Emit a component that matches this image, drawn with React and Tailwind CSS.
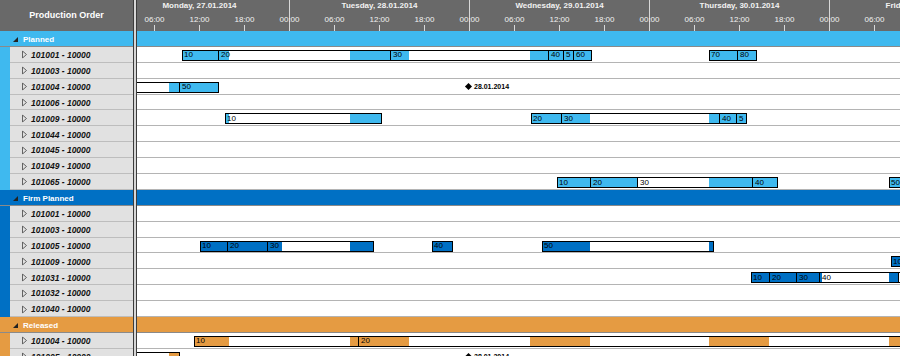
import React from 'react'

const ORIGIN = 137

const hours = Array.from({ length: 17 }, (_, k) => ({
  x: 154 + 45 * k,
  label: ['06:00', '12:00', '18:00', '00:00'][k % 4],
}))

const days = [
  { x: 199, label: 'Monday, 27.01.2014' },
  { x: 379, label: 'Tuesday, 28.01.2014' },
  { x: 559, label: 'Wednesday, 29.01.2014' },
  { x: 739, label: 'Thursday, 30.01.2014' },
  { x: 919, label: 'Friday, 31.01.2014' },
]

const groups = [
  {
    name: 'Planned',
    band: 'bg-[#3fb9ef]',
    rows: [
      {
        id: '101001 - 10000',
        bars: [
          { from: 182, to: 592, fills: [[182, 229], [350, 409], [530, 592]], marks: [[182, '10'], [218, '20'], [390, '30'], [548, '40'], [563, '5'], [573, '60']] },
          { from: 709, to: 757, fills: [[709, 757]], marks: [[709, '70'], [737, '80']] },
        ],
      },
      { id: '101003 - 10000' },
      {
        id: '101004 - 10000',
        bars: [{ from: 128, to: 219, fills: [[169, 219]], marks: [[179, '50']], ghost: 169 }],
        milestone: { x: 469, label: '28.01.2014' },
      },
      { id: '101006 - 10000' },
      {
        id: '101009 - 10000',
        bars: [
          { from: 225, to: 382, fills: [[225, 229], [350, 382]], marks: [[225, '10']] },
          { from: 531, to: 747, fills: [[531, 590], [709, 747]], marks: [[531, '20'], [561, '30'], [719, '40'], [736, '5']] },
        ],
      },
      { id: '101044 - 10000' },
      { id: '101045 - 10000' },
      { id: '101049 - 10000' },
      {
        id: '101065 - 10000',
        bars: [
          { from: 557, to: 778, fills: [[557, 638], [709, 778]], marks: [[557, '10'], [590, '20'], [637, '30'], [752, '40']] },
          { from: 889, to: 920, fills: [[889, 920]], marks: [[889, '50']] },
        ],
      },
    ],
  },
  {
    name: 'Firm Planned',
    band: 'bg-[#0070c4]',
    rows: [
      { id: '101001 - 10000' },
      { id: '101003 - 10000' },
      {
        id: '101005 - 10000',
        bars: [
          { from: 200, to: 374, fills: [[200, 282], [350, 374]], marks: [[200, '10'], [227, '20'], [267, '30']] },
          { from: 432, to: 453, fills: [[432, 453]], marks: [[432, '40']] },
          { from: 542, to: 714, fills: [[542, 590], [709, 714]], marks: [[542, '50']] },
        ],
      },
      { id: '101009 - 10000', bars: [{ from: 891, to: 920, fills: [[891, 920]], marks: [[891, '10']] }] },
      {
        id: '101031 - 10000',
        bars: [
          { from: 751, to: 920, fills: [[751, 822], [889, 898]], marks: [[751, '10'], [769, '20'], [796, '30'], [819, '40'], [898, '']] },
        ],
      },
      { id: '101032 - 10000' },
      { id: '101040 - 10000' },
    ],
  },
  {
    name: 'Released',
    band: 'bg-[#e59b42]',
    rows: [
      {
        id: '101004 - 10000',
        bars: [{ from: 194, to: 920, fills: [[194, 229], [350, 409], [530, 590], [709, 769], [889, 920]], marks: [[194, '10'], [358, '20']] }],
      },
      {
        id: '101005 - 10000',
        bars: [{ from: 128, to: 180, fills: [[169, 180]], marks: [], ghost: 169 }],
        milestone: { x: 469, label: '28.01.2014' },
      },
    ],
  },
]

const font = "font-['Liberation_Sans',Arial,sans-serif]"

function Bar({ bar, fill }) {
  const { from, to, fills = [], marks = [] } = bar
  return (
    <div
      className="absolute top-[3px] h-[11px] border border-black bg-white overflow-hidden"
      style={{ left: from - ORIGIN, width: to - from }}
    >
      {bar.ghost && (
        <div className="absolute -top-px -bottom-px left-[-1px] border-y border-[#b0b0b0] bg-white" style={{ width: bar.ghost - from }} />
      )}
      {fills.map(([a, b], i) => (
        <div key={i} className={`absolute inset-y-0 ${fill}`} style={{ left: a - from - 1, width: b - a }} />
      ))}
      {marks.map(([x, label], i) => (
        <div key={i} className="absolute inset-y-0 flex items-center" style={{ left: x - from - 1 }}>
          {x > from && <div className="w-px h-full bg-black" />}
          <span className="pl-[2px] text-[8px] leading-none text-black">{label}</span>
        </div>
      ))}
    </div>
  )
}

function Milestone({ m }) {
  return (
    <div className="absolute inset-y-0 flex items-center gap-[3px]" style={{ left: m.x - ORIGIN - 3 }}>
      <div className="w-[5px] h-[5px] bg-black rotate-45" />
      <span className="text-[7px] font-bold leading-none text-black">{m.label}</span>
    </div>
  )
}

function GroupLabel({ group }) {
  return (
    <div className={`h-[15.9px] shrink-0 flex items-center gap-[5px] pl-[13px] border-b border-[#8a8a8a] ${group.band}`}>
      <svg width="5" height="5" viewBox="0 0 5 5" className="translate-y-[1px]">
        <polygon points="5,0 5,5 0,5" fill="#222" />
      </svg>
      <span className="text-white font-bold text-[8px] leading-none translate-y-[1.5px]">{group.name}</span>
    </div>
  )
}

function ItemLabel({ row, group }) {
  return (
    <div className="h-[15.9px] shrink-0 flex">
      <div className={`w-[10px] shrink-0 ${group.band}`} />
      <div className="flex-1 flex items-center gap-[4px] pl-[12px] bg-[#e1e1e1] border-b border-[#bdbdbd]">
        <svg width="5" height="8" viewBox="0 0 5 8" className="translate-y-[0.5px]">
          <polygon points="0.5,0.5 4.5,4 0.5,7.5" fill="none" stroke="#555" strokeWidth="0.9" />
        </svg>
        <span className="italic font-bold text-[8.5px] leading-none text-[#111] translate-y-[1px]">{row.id}</span>
      </div>
    </div>
  )
}

export default function App() {
  return (
    <div className={`flex w-[900px] h-[356px] overflow-hidden bg-white ${font}`}>
      {/* left list */}
      <div className="w-[133px] shrink-0 flex flex-col overflow-hidden">
        <div className="h-[31px] shrink-0 bg-[#696969] flex items-center justify-center text-white font-bold text-[9px]">
          Production Order
        </div>
        {groups.map((g) => (
          <React.Fragment key={g.name}>
            <GroupLabel group={g} />
            {g.rows.map((r) => (
              <ItemLabel key={g.name + r.id} row={r} group={g} />
            ))}
          </React.Fragment>
        ))}
      </div>

      {/* splitter */}
      <div className="w-[4px] shrink-0 border-x border-[#3c3c3c] bg-[#d6d6d6]" />

      {/* timeline */}
      <div className="flex-1 flex flex-col overflow-hidden">
        <div className="relative h-[31px] shrink-0 bg-[#696969] text-[#f2f2f2]">
          {hours.map((h) =>
            h.label === '00:00' ? (
              <div key={'d' + h.x} className="absolute top-0 bottom-0 w-px bg-[#d8d8d8]" style={{ left: h.x - ORIGIN }} />
            ) : (
              <div key={'t' + h.x} className="absolute top-[25px] h-[6px] w-px bg-[#d8d8d8]" style={{ left: h.x - ORIGIN }} />
            )
          )}
          {hours.map((h) => (
            <span
              key={h.x}
              className="absolute top-[16px] -translate-x-1/2 text-[8px] leading-none whitespace-nowrap"
              style={{ left: h.x - ORIGIN + 0.5 }}
            >
              {h.label}
            </span>
          ))}
          {days.map((d) => (
            <span
              key={d.label}
              className="absolute top-[2px] -translate-x-1/2 text-[8px] font-bold leading-none whitespace-nowrap"
              style={{ left: d.x - ORIGIN + 0.5 }}
            >
              {d.label}
            </span>
          ))}
        </div>

        {groups.map((g) => (
          <React.Fragment key={g.name}>
            <div className={`h-[15.9px] shrink-0 border-b border-[#8a8a8a] ${g.band}`} />
            {g.rows.map((r) => (
              <div key={g.name + r.id} className="relative h-[15.9px] shrink-0 border-b border-[#b4b4b4]">
                {(r.bars || []).map((b, i) => (
                  <Bar key={i} bar={b} fill={g.band} />
                ))}
                {r.milestone && <Milestone m={r.milestone} />}
              </div>
            ))}
          </React.Fragment>
        ))}
      </div>
    </div>
  )
}
